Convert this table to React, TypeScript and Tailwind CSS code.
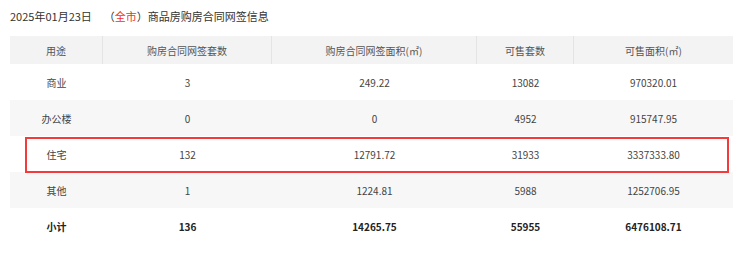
const cols = 'grid grid-cols-[93px_169px_205px_97px_159px]';

const head = ['用途', '购房合同网签套数', '购房合同网签面积(㎡)', '可售套数', '可售面积(㎡)'];

const rows: { cells: string[]; shaded?: boolean; bold?: boolean }[] = [
  { cells: ['商业', '3', '249.22', '13082', '970320.01'] },
  { cells: ['办公楼', '0', '0', '4952', '915747.95'], shaded: true },
  { cells: ['住宅', '132', '12791.72', '31933', '3337333.80'] },
  { cells: ['其他', '1', '1224.81', '5988', '1252706.95'], shaded: true },
  { cells: ['小计', '136', '14265.75', '55955', '6476108.71'], bold: true },
];

export default function App() {
  return (
    <div
      className="w-[740px] h-[260px] bg-white text-[#333]"
      style={{ fontFamily: '"Noto Sans CJK SC", "Noto Sans", sans-serif' }}
    >
      <div className="flex items-center h-[32px] pl-[10px] text-[11px] text-[#333]">
        <span>2025年01月23日</span>
        <span className="ml-[12px]">（<span className="text-[#f23030]">全市</span>）商品房购房合同网签信息</span>
      </div>
      <div className="relative ml-[10px] mt-[4px] w-[723px] text-[10px]">
        <div className={`${cols} h-[28px] bg-[#f3f3f3] text-[#555]`}>
          {head.map((h, i) => (
            <div
              key={h}
              className={`flex items-center justify-center ${i < head.length - 1 ? 'border-r border-[#e4e4e4]' : ''}`}
            >
              {h}
            </div>
          ))}
        </div>
        {rows.map((r) => (
          <div
            key={r.cells[0]}
            className={`${cols} h-[36px] ${r.shaded ? 'bg-[#f7f7f7]' : 'bg-white'} ${r.bold ? 'font-bold text-[#222]' : 'text-[#444]'}`}
          >
            {r.cells.map((c, i) => (
              <div key={i} className="flex items-center justify-center">
                {c}
              </div>
            ))}
          </div>
        ))}
        <div className="absolute left-[15px] top-[101px] w-[704px] h-[36px] border-2 border-[#f43a3a]" />
      </div>
    </div>
  );
}
